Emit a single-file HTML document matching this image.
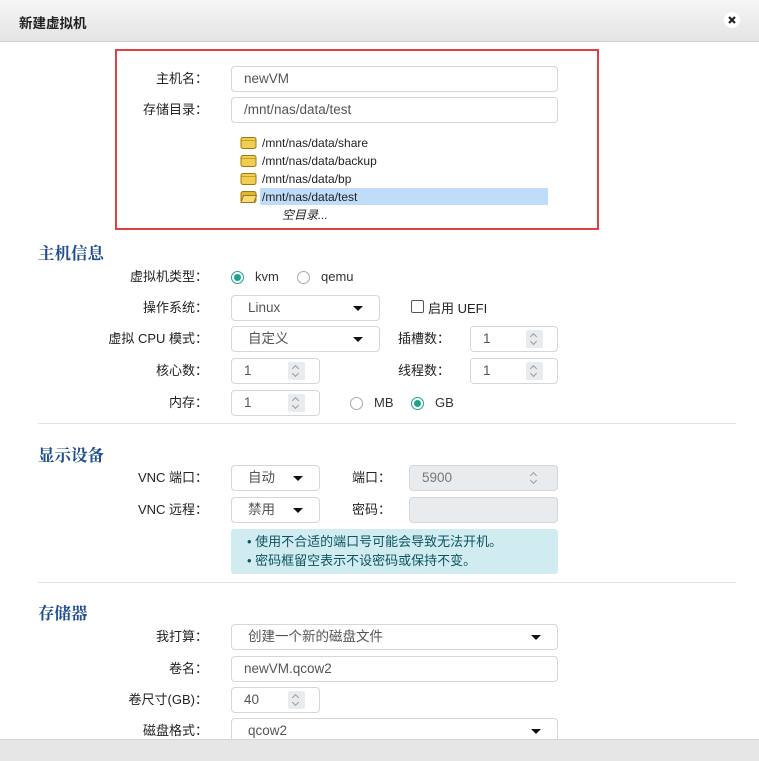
<!DOCTYPE html>
<html><head><meta charset="utf-8"><style>
*{box-sizing:border-box;margin:0;padding:0}
body{width:759px;height:761px;position:relative;overflow:hidden;background:#fff;font-family:"Liberation Sans","Noto Sans CJK SC",sans-serif;font-size:13px;color:#333}
.a{position:absolute}
.hdr{left:0;top:0;width:759px;height:42px;background:linear-gradient(#f6f6f6,#e4e4e4);border-bottom:1px solid #cfcfcf}
.title{left:19px;top:12px;font-weight:bold;font-size:13.5px;color:#222}
.close{left:724px;top:12px;width:16px;height:16px;border-radius:50%;background:#fff}
.red{left:115px;top:49px;width:484px;height:181px;border:2.5px solid #e04040}
.lbl{text-align:right;width:200px;left:8px;line-height:25px;color:#222}
.inp{border:1px solid #d6d6d6;border-radius:4px;height:26px;line-height:24px;padding-left:12px;color:#555;background:#fff;font-size:13.5px}
.sel{padding-left:16px}
.sel:after{content:"";position:absolute;right:16px;top:10px;border-left:5px solid transparent;border-right:5px solid transparent;border-top:5px solid #111}
.spin{position:absolute;right:14px;top:3px;width:17px;height:18px;background:#e9ecef;border-radius:2px}
.spin:before{content:"";position:absolute;left:5px;top:4px;width:4px;height:4px;border-left:1px solid #999;border-top:1px solid #999;transform:rotate(45deg)}
.spin:after{content:"";position:absolute;left:5px;top:9px;width:4px;height:4px;border-right:1px solid #999;border-bottom:1px solid #999;transform:rotate(45deg)}
.dis{background:#e9ecef}
.h{left:38px;font-family:"Noto Serif CJK SC",serif;font-weight:bold;font-size:16.5px;color:#1f4d8f}
.hr{left:38px;width:698px;height:1px;background:#e3e3e3}
.rad{width:13px;height:13px;border-radius:50%;border:1px solid #aaa;background:#fff}
.rad.on{border:1px solid #1aa58a}
.rad.on:after{content:"";position:absolute;left:2px;top:2px;width:7px;height:7px;border-radius:50%;background:#1aa58a}
.fd{left:240px;width:17px;height:13px}
.ft{left:262px;font-size:12px;color:#222;line-height:18px}
</style></head><body>
<div class="a hdr"></div>
<div class="a title">新建虚拟机</div>
<div class="a close"><svg width="16" height="16"><path d="M5 5L11 11M11 5L5 11" stroke="#222" stroke-width="2.2"/></svg></div>
<div class="a red"></div>

<div class="a lbl" style="top:66px">主机名：</div>
<div class="a inp" style="left:231px;top:66px;width:327px">newVM</div>
<div class="a lbl" style="top:97px">存储目录：</div>
<div class="a inp" style="left:231px;top:97px;width:327px">/mnt/nas/data/test</div>

<div class="a" style="left:260px;top:188px;width:288px;height:17px;background:#bfdcf8"></div>
<svg class="a fd" style="top:136px" viewBox="0 0 17 13"><rect x="1" y="1.5" width="15" height="11" rx="2" fill="#f0cf50" stroke="#a07a10"/><path d="M1.5 4.5h14" stroke="#c9a020"/></svg>
<svg class="a fd" style="top:154px" viewBox="0 0 17 13"><rect x="1" y="1.5" width="15" height="11" rx="2" fill="#f0cf50" stroke="#a07a10"/><path d="M1.5 4.5h14" stroke="#c9a020"/></svg>
<svg class="a fd" style="top:172px" viewBox="0 0 17 13"><rect x="1" y="1.5" width="15" height="11" rx="2" fill="#f0cf50" stroke="#a07a10"/><path d="M1.5 4.5h14" stroke="#c9a020"/></svg>
<svg class="a fd" style="top:190px" viewBox="0 0 17 13"><rect x="1" y="1.5" width="15" height="11" rx="2" fill="#e0b830" stroke="#a07a10"/><path d="M3.5 5.5h13l-2.5 7H1z" fill="#f6dc78" stroke="#a07a10"/></svg>
<div class="a ft" style="top:134px">/mnt/nas/data/share</div>
<div class="a ft" style="top:152px">/mnt/nas/data/backup</div>
<div class="a ft" style="top:170px">/mnt/nas/data/bp</div>
<div class="a ft" style="top:188px">/mnt/nas/data/test</div>
<div class="a ft" style="left:282px;top:206px;font-style:italic">空目录...</div>

<div class="a h" style="top:240px">主机信息</div>
<div class="a lbl" style="top:264px">虚拟机类型：</div>
<div class="a rad on" style="left:231px;top:271px"></div><div class="a" style="left:255px;top:269px">kvm</div>
<div class="a rad" style="left:297px;top:271px"></div><div class="a" style="left:321px;top:269px">qemu</div>
<div class="a lbl" style="top:295px">操作系统：</div>
<div class="a inp sel" style="left:231px;top:295px;width:149px">Linux</div>
<div class="a" style="left:411px;top:300px;width:13px;height:13px;border:1.5px solid #555;border-radius:2px"></div>
<div class="a" style="left:428px;top:298px;color:#222">启用 UEFI</div>
<div class="a lbl" style="top:326px">虚拟 CPU 模式：</div>
<div class="a inp sel" style="left:231px;top:326px;width:149px">自定义</div>
<div class="a" style="left:398px;top:326px;line-height:25px;color:#222">插槽数：</div>
<div class="a inp" style="left:470px;top:326px;width:88px">1<span class="spin"></span></div>
<div class="a lbl" style="top:358px">核心数：</div>
<div class="a inp" style="left:231px;top:358px;width:89px">1<span class="spin"></span></div>
<div class="a" style="left:398px;top:358px;line-height:25px;color:#222">线程数：</div>
<div class="a inp" style="left:470px;top:358px;width:88px">1<span class="spin"></span></div>
<div class="a lbl" style="top:390px">内存：</div>
<div class="a inp" style="left:231px;top:390px;width:89px">1<span class="spin"></span></div>
<div class="a rad" style="left:350px;top:397px"></div><div class="a" style="left:374px;top:395px">MB</div>
<div class="a rad on" style="left:411px;top:397px"></div><div class="a" style="left:435px;top:395px">GB</div>
<div class="a hr" style="top:423px"></div>

<div class="a h" style="top:442px">显示设备</div>
<div class="a lbl" style="top:465px">VNC 端口：</div>
<div class="a inp sel" style="left:231px;top:465px;width:89px">自动</div>
<div class="a" style="left:352px;top:465px;line-height:25px;color:#222">端口：</div>
<div class="a inp dis" style="left:409px;top:465px;width:149px;color:#777">5900<span class="spin" style="background:none"></span></div>
<div class="a lbl" style="top:497px">VNC 远程：</div>
<div class="a inp sel" style="left:231px;top:497px;width:89px">禁用</div>
<div class="a" style="left:352px;top:497px;line-height:25px;color:#222">密码：</div>
<div class="a inp dis" style="left:409px;top:497px;width:149px"></div>
<div class="a" style="left:231px;top:529px;width:327px;height:45px;background:#d1ecf1;border-radius:3px;padding:3px 0 0 16px;line-height:19px;color:#0c5460">• 使用不合适的端口号可能会导致无法开机。<br>• 密码框留空表示不设密码或保持不变。</div>
<div class="a hr" style="top:582px"></div>

<div class="a h" style="top:600px">存储器</div>
<div class="a lbl" style="top:624px">我打算：</div>
<div class="a inp sel" style="left:231px;top:624px;width:327px">创建一个新的磁盘文件</div>
<div class="a lbl" style="top:656px">卷名：</div>
<div class="a inp" style="left:231px;top:656px;width:327px">newVM.qcow2</div>
<div class="a lbl" style="top:687px">卷尺寸(GB)：</div>
<div class="a inp" style="left:231px;top:687px;width:89px">40<span class="spin"></span></div>
<div class="a lbl" style="top:718px">磁盘格式：</div>
<div class="a inp sel" style="left:231px;top:718px;width:327px">qcow2</div>
<div class="a" style="left:0;top:739px;width:759px;height:22px;background:#e6e6e6;border-top:1px solid #d6d6d6"></div>
</body></html>
